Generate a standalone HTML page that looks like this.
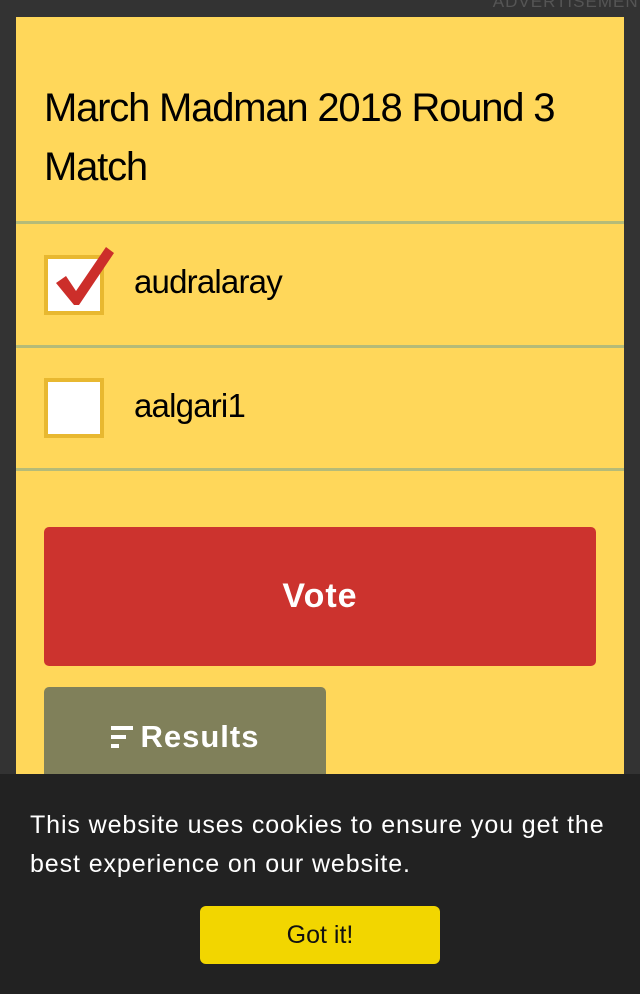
<!DOCTYPE html>
<html><head><meta charset="utf-8"><style>
*{margin:0;padding:0;box-sizing:border-box}
body{width:640px;height:994px;background:#333;position:relative;overflow:hidden;font-family:"Liberation Sans",sans-serif}
.ad{position:absolute;right:-10px;top:-8px;color:#555;font-size:17px;letter-spacing:1px}
.card{position:absolute;left:16px;top:17px;width:608px;height:900px;background:#ffd75a}
h1{position:absolute;left:28px;top:62px;width:560px;font-weight:normal;font-size:40px;line-height:59px;color:#000;letter-spacing:-1.2px}
.hr{position:absolute;left:0;width:608px;height:3px;background:#b5bb78}
.cb{position:absolute;left:28px;width:60px;height:60px;background:#fff;border:4px solid #e8b830}
.lbl{position:absolute;left:118px;font-size:33px;color:#000;letter-spacing:-0.8px}
.vote{position:absolute;left:28px;top:510px;width:552px;height:139px;background:#cc332e;border-radius:5px;color:#fff;font-size:34px;font-weight:bold;text-align:center;line-height:139px;letter-spacing:1px}
.res{position:absolute;left:28px;top:670px;width:282px;height:139px;background:#80805a;border-radius:5px;color:#fff;font-size:31px;font-weight:bold;text-align:center;line-height:100px;letter-spacing:1px}
.cookie{position:absolute;left:0;top:774px;width:640px;height:220px;background:#222}
.ct{position:absolute;left:30px;top:32px;width:600px;color:#fff;font-size:25px;line-height:39px;letter-spacing:0.9px}
.got{position:absolute;left:200px;top:132px;width:240px;height:58px;background:#f2d600;border-radius:6px;color:#111;font-size:25px;text-align:center;line-height:58px}
</style></head><body>
<div class="ad">ADVERTISEMENT</div>
<div class="card">
<h1>March Madman 2018 Round 3 Match</h1>
<div class="hr" style="top:204px"></div>
<div class="cb" style="top:238px"></div>
<svg style="position:absolute;left:36px;top:228px" width="64" height="64" viewBox="0 0 64 64"><path d="M4 38 L14 31 L24 46 L54 2 L62 8 L27 60 L22 60 Z" fill="#cc2e2a"/></svg>
<div class="lbl" style="top:246px">audralaray</div>
<div class="hr" style="top:328px"></div>
<div class="cb" style="top:361px"></div>
<div class="lbl" style="top:370px">aalgari1</div>
<div class="hr" style="top:451px"></div>
<div class="vote">Vote</div>
<div class="res"><svg width="24" height="22" viewBox="0 0 24 22" style="vertical-align:-1px;margin-right:6px"><rect x="0" y="0" width="22" height="4" fill="#fff"/><rect x="0" y="9" width="15" height="4" fill="#fff"/><rect x="0" y="18" width="8" height="4" fill="#fff"/></svg>Results</div>
</div>
<div class="cookie">
<div class="ct">This website uses cookies to ensure you get the best experience on our website.</div>
<div class="got">Got it!</div>
</div>
</body></html>
